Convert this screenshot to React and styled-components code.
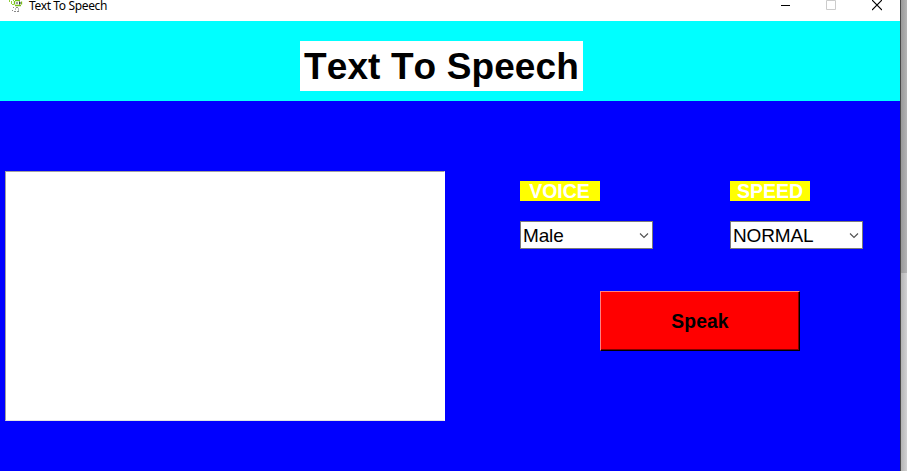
import React from 'react';
import styled, { createGlobalStyle } from 'styled-components';

const Global = createGlobalStyle`
  * { box-sizing: border-box; }
  body { margin: 0; overflow: hidden; font-family: "Liberation Sans", Arial, sans-serif; }
`;
const Desktop = styled.div`
  display: flex; width: 907px; height: 471px; overflow: hidden; background: #fff;
`;
const Window = styled.main`
  width: 901px; height: 471px; display: flex; flex-direction: column;
  background: #00f; border-right: 1px solid #484848;
`;
const Backdrop = styled.div`
  width: 6px; height: 471px; display: flex; flex-direction: column;
`;
const Shade = styled.div`
  height: ${p => p.$h}px;
  background: linear-gradient(90deg, ${p => p.$from}, ${p => p.$to});
`;
const TitleBar = styled.div`
  height: 21px; flex: none; background: #fff; display: flex; align-items: flex-start;
  padding-left: 8px;
`;
const Caption = styled.span`
  flex: 1; padding-left: 5px; color: #000; white-space: nowrap;
  font: 12px/12px "Noto Sans", "Open Sans", sans-serif;
  letter-spacing: ${p => p.$spacing}px;
`;
const Controls = styled.div`
  display: flex; gap: 36px; padding-right: 18px;
`;
const Header = styled.header`
  height: 80px; flex: none; background: #0ff; display: flex; justify-content: center;
  align-items: flex-start; padding: 20px 17px 0 0;
`;
const Heading = styled.h1`
  margin: 0; width: 283px; height: 50px; background: #fff; color: #000;
  text-align: center; white-space: nowrap; font-size: 37px; line-height: 52px;
  font-kerning: none; letter-spacing: 0.1px;
`;
const Body = styled.section`
  display: flex; align-items: flex-start; padding: 70px 0 0 5px;
`;
const TextInput = styled.div`
  width: 440px; height: 250px; background: #fff; border: 1px solid;
  border-color: #a0a0a0 #fff #e3e3e3 #a0a0a0;
`;
const Panel = styled.div`
  margin: 10px 0 0 75px; display: flex; flex-direction: column;
`;
const Fields = styled.div`
  display: flex; gap: 77px;
`;
const Field = styled.div`
  width: 133px; display: flex; flex-direction: column; gap: 20px;
`;
const Label = styled.div`
  width: 80px; height: 20px; background: #ff0; color: #fff; text-align: center;
  font-size: 19.5px; line-height: 21px; font-weight: bold; font-kerning: none;
  padding-right: ${p => p.$inset || 0}px;
`;
const Combo = styled.div`
  height: 28px; border: 1px solid #7a7a7a; background: #fff; color: #000;
  display: flex; align-items: center; justify-content: space-between;
  padding: 2px 3px 0 2px; font-size: 19px; line-height: 24px; font-kerning: none;
  letter-spacing: -0.15px;
`;
const SpeakButton = styled.button`
  width: 200px; height: 60px; margin: 42px 0 0 80px; padding: 2px 0 0; border: 1px solid;
  border-color: #ff8080 #000 #000 #ff8080; border-radius: 0;
  box-shadow: inset -1px -1px #800000; background: #f00; color: #000;
  font: bold 19.3px/56px "Liberation Sans", Arial, sans-serif; letter-spacing: 0.1px;
`;

const AppIcon = () => (
  <svg width="16" height="14" viewBox="0 0 16 14" fill="none">
    <path d="M1.5 0v2M3.5 1v3M5.5 0v1M4 4.5h2" stroke="#8fd03a" />
    <path d="M7 .5h5M6.5 1v3.5M7 5.5h6M13.5 1.5v3" stroke="#76c018" strokeWidth="1.3" />
    <path d="M8 3h2M11 3h2M11.5 1.5v3" stroke="#334" />
    <path d="M5 7.5h1M8 7.5h3M4 10.5h1M6 11.5h5" stroke="#888" strokeDasharray="2 1" />
    <path d="M7.5 8v2M10.5 8v3" stroke="#bbb" />
  </svg>
);
const Chevron = () => (
  <svg width="10" height="8" viewBox="0 0 10 8" fill="none" stroke="#505050" strokeWidth="1.1">
    <path d="M1 1.5l4 4 4-4" />
  </svg>
);

const Choice = ({ label, value, inset }) => (
  <Field>
    <Label $inset={inset}>{label}</Label>
    <Combo>{value}<Chevron /></Combo>
  </Field>
);

export default function App() {
  return (
    <>
      <Global />
      <Desktop>
        <Window>
          <TitleBar>
            <AppIcon />
            <Caption $spacing={-0.36}>Text To Speech</Caption>
            <Controls>
              <svg width="10" height="11"><path d="M1 5.5h9" stroke="#000" /></svg>
              <svg width="10" height="11" fill="none"><path d="M.5 .5h9v9h-9z" stroke="#ccc" /></svg>
              <svg width="10" height="11" fill="none"><path d="M0 0l10 10M10 0l-10 10" stroke="#000" strokeWidth="1.2" /></svg>
            </Controls>
          </TitleBar>
          <Header><Heading>Text To Speech</Heading></Header>
          <Body>
            <TextInput />
            <Panel>
              <Fields>
                <Choice label="VOICE" value="Male" inset={1} />
                <Choice label="SPEED" value="NORMAL" />
              </Fields>
              <SpeakButton>Speak</SpeakButton>
            </Panel>
          </Body>
        </Window>
        <Backdrop>
          <Shade $h={273} $from="#999" $to="#b4b4b4" />
          <Shade $h={198} $from="#b4b4b4" $to="#d2d2d2" />
        </Backdrop>
      </Desktop>
    </>
  );
}
